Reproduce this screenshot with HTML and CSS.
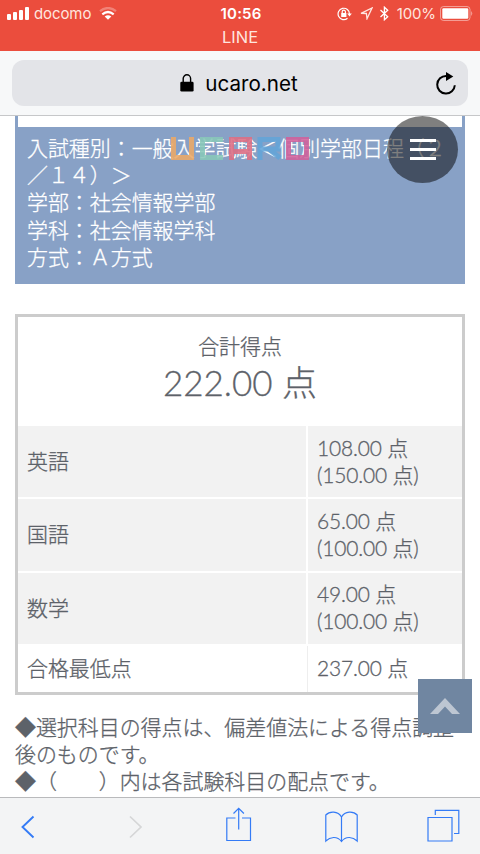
FILE: index.html
```
<!DOCTYPE html>
<html lang="ja">
<head>
<meta charset="utf-8">
<title>ucaro.net</title>
<link rel="stylesheet" href="styles.css">
</head>
<body>
<div class="phone">
  <header class="status">
    <div class="status-row">
      <div class="carrier">
        <svg class="signal" width="22" height="13" viewBox="0 0 22 13" fill="#fff"><rect x="0" y="7" width="4" height="6" rx="1"/><rect x="6" y="5" width="4" height="8" rx="1"/><rect x="12" y="3" width="4" height="10" rx="1"/><rect x="18" y="0" width="4" height="13" rx="1"/></svg>
        <span class="carrier-name">docomo</span>
        <svg class="wifi" width="18" height="13" viewBox="0 0 18 13" fill="none" stroke="#fff" stroke-width="2.2"><path d="M1 4.200Q9-2.200 17 4.200" opacity=".3"/><path d="M3.300 7.300Q9 2.700 14.700 7.300"/><path d="M5.700 9.500Q9 6.900 12.300 9.500L9 12.800z" fill="#fff" stroke="none"/></svg>
      </div>
      <span class="clock">10:56</span>
      <div class="indicators">
        <svg width="15" height="14" viewBox="0 0 15 14" fill="none" stroke="#fff" stroke-width="1.2"><path d="M12.500 7A5.700 5.700 0 1 0 10.500 11.300"/><path d="M10.200 6.500h4.600l-2.300 3z" fill="#fff" stroke="none"/><path d="M4.200 6h5.200v4H4.200z" fill="#fff" stroke="none"/><path d="M5.200 6V4.800a1.600 1.600 0 0 1 3.200 0V6"/></svg>
        <svg class="locate" width="13" height="13" viewBox="0 0 13 13" fill="none" stroke="#ffe5df" stroke-width="1.3"><path d="M1 6.400L12 1L7 11.700L6.400 6.500z"/></svg>
        <svg class="bluetooth" width="9" height="15" viewBox="0 0 9 15" fill="none" stroke="#fff" stroke-width="1.3"><path d="M.5 4l7.200 6.800-3.300 3V1.200l3.300 3L.5 11"/></svg>
        <span class="percent">100%</span>
        <svg class="battery" width="33" height="15" viewBox="0 0 33 15"><rect x=".5" y=".5" width="29.500" height="14" rx="3" fill="none" stroke="#fff" opacity=".45"/><rect x="2.300" y="2.300" width="26" height="10.400" rx="1.2" fill="#fff"/><path d="M31.200 5q2 2.500 0 5z" fill="#fff" opacity=".5"/></svg>
      </div>
    </div>
    <div class="app-name">LINE</div>
  </header>

  <div class="browser-bar">
    <div class="address">
      <span class="spacer"></span>
      <div class="host">
        <svg width="14" height="18" viewBox="0 0 14 18"><path d="M3.200 9V4.500a3.700 3.700 0 0 1 7.400 0V9" fill="none" stroke="#000" stroke-width="1.4"/><rect x=".3" y="7.800" width="13.300" height="9.700" rx="1.3"/></svg>
        <span>ucaro.net</span>
      </div>
      <div class="reload"><svg width="22" height="25" viewBox="0 0 22 25"><path d="M11.300 5A8.800 8.800 0 1 0 19.800 14.300" fill="none" stroke="#000" stroke-width="2"/><path d="M11 1l7.300 4.600-7.300 4.500z"/></svg></div>
    </div>
  </div>

  <main class="page">
    <section class="exam">
      <div class="exam-gap"></div>
      <div class="exam-body">
        <p>入試種別：一般入学試験＜個別学部日程（２</p>
        <p>／１４）＞</p>
        <p>学部：社会情報学部</p>
        <p>学科：社会情報学科</p>
        <p>方式：Ａ方式</p>
      </div>
    </section>
    <section class="scores">
      <div class="total">
        <div class="total-label">合計得点</div>
        <div class="total-value">222.00 点</div>
      </div>
      <div class="row"><div class="subject">英語</div><div class="points"><span>108.00 点</span><span>(150.00 点)</span></div></div>
      <div class="row"><div class="subject">国語</div><div class="points"><span>65.00 点</span><span>(100.00 点)</span></div></div>
      <div class="row"><div class="subject">数学</div><div class="points"><span>49.00 点</span><span>(100.00 点)</span></div></div>
      <div class="row row-last"><div class="subject">合格最低点</div><div class="points"><span>237.00 点</span></div></div>
    </section>
    <section class="notes">
      <p>◆選択科目の得点は、偏差値法による得点調整</p>
      <p>後のものです。</p>
      <p>◆（　　）内は各試験科目の配点です。</p>
    </section>

    <svg class="logo" width="140" height="24" viewBox="0 0 140 24" fill="none" stroke-width="5">
      <path d="M2.500 0V20.500H20.500V0" stroke="#edaa67"/>
      <path d="M52 2.500H31.500V20.500H52" stroke="#88c8b9"/>
      <path d="M60.500 23V2.500H78.500V23M60 14.500H78" stroke="#df6e84"/>
      <path d="M89 23V2.500H107V12H90M99 13L109 21" stroke="#63a5d9"/>
      <path d="M117.500 2.500H135.500V20.500H117.500Z" stroke="#d1619b"/>
    </svg>
    <div class="menu"><i></i><i></i><i></i></div>
    <div class="to-top"><svg width="32" height="16" viewBox="0 0 32 16"><path d="M1 16L16 0L31 16H23L16 8.500L9 16z" fill="#bdc6d2"/></svg></div>
  </main>

  <nav class="toolbar">
    <svg class="back" width="14" height="24" viewBox="0 0 14 24" fill="none" stroke="#347bf6" stroke-width="1.9"><path d="M12.500 1.500L1.500 12L12.500 22.500"/></svg>
    <svg class="forward" width="14" height="24" viewBox="0 0 14 24" fill="none" stroke="#d5d6d7" stroke-width="1.7"><path d="M1 1.500L12 12L1 22.500"/></svg>
    <svg class="share" width="26" height="35" viewBox="0 0 26 35" fill="none" stroke="#347bf6" stroke-width="1.2"><path d="M9.500 11H.8V33.500H24.500V11H16M12.700 22.500V1.500M7.500 6.500L12.700 1.300L17.900 6.500"/></svg>
    <svg class="book" width="34" height="32" viewBox="0 0 34 32" fill="none" stroke="#347bf6" stroke-width="1.2"><path d="M16.500 6C13-.3 4.500 0 .8 4V30C5 26 12 24.500 16.500 30.500C21 24.500 28 26 32.200 30V4C28.500 0 20 -.3 16.500 6V31"/></svg>
    <svg class="tabs" width="33" height="33" viewBox="0 0 33 33" fill="none" stroke="#347bf6" stroke-width="1.2"><path d="M1 8.500H25V32H1zM8.300 6V1.300H31.800V24.500H27"/></svg>
  </nav>
</div>
</body>
</html>
```

FILE: styles.css
```
* { box-sizing: border-box; }
body { margin: 0; background: #fff; font-family: Inter, "Noto Sans CJK JP", sans-serif; }
p { margin: 0; }
svg { display: block; flex: none; }
.phone { display: flex; flex-direction: column; width: 480px; height: 854px; overflow: hidden; }

.status { height: 51px; flex: none; background: #eb4d3d; color: #fff; }
.status-row { display: grid; grid-template-columns: 1fr auto 1fr; align-items: center; height: 27px; padding: 0 7px; }
.carrier, .indicators { display: flex; align-items: center; }
.carrier-name { margin-left: 5px; font-size: 15px; line-height: 20px; letter-spacing: -.1px; color: #ffe5df; }
.wifi { margin-left: 8px; }
.clock { padding-left: 2px; font-size: 15px; font-weight: 600; line-height: 20px; letter-spacing: .15px; }
.indicators { justify-content: flex-end; }
.locate { margin-left: 8px; }
.bluetooth { margin-left: 7px; }
.percent { margin-left: 8px; font-size: 15px; letter-spacing: -.1px; color: #ffe5df; }
.battery { margin-left: 4px; }
.app-name { text-align: center; font-size: 16.500px; line-height: 21px; color: #ffe5df; }

.browser-bar { height: 65px; flex: none; padding: 9px 12px; background: #f7f8f9; border-bottom: 1px solid #c6c7c9; }
.address { display: grid; grid-template-columns: 1fr auto 1fr; align-items: center; height: 46px; padding: 0 11px; border-radius: 12px; background: #e3e4e8; }
.host { display: flex; align-items: center; gap: 11px; margin-left: -2px; font-size: 20.600px; color: #000; }
.reload { justify-self: end; }

.page { position: relative; flex: 1; min-height: 0; overflow: hidden; padding: 0 15px; font-family: Lato, "Noto Sans CJK JP", sans-serif; font-weight: 300; font-size: 20.950px; color: #5d6269; -webkit-text-stroke: .3px currentColor; }
.exam { height: 168px; border: 3px solid #88a1c6; border-top: 0; background: #88a1c6; color: #fff; }
.exam-gap { height: 11px; background: #fff; }
.exam-body { padding: 7px 9px 0; line-height: 27.200px; white-space: nowrap; }

.scores { margin-top: 30px; height: 381px; border: 3px solid #ccc; }
.total { height: 109px; padding-top: 15px; text-align: center; }
.total-label { line-height: 28px; }
.total-value { font-size: 35px; line-height: 45px; }
.row { display: grid; grid-template-columns: 288px 1fr; column-gap: 2px; height: 71.300px; margin-bottom: 2px; }
.subject, .points { display: flex; background: #f2f2f2; padding: 0 9px 2px; line-height: 27px; white-space: nowrap; }
.subject { align-items: center; }
.points { flex-direction: column; justify-content: center; letter-spacing: -.15px; }
.row-last { height: 46px; margin: 0; }
.row-last > div { background: #fff; }
.row-last .points { box-shadow: -1px 0 #eee; }
.notes { margin-top: 18px; line-height: 27px; white-space: nowrap; }

.logo { position: absolute; left: 171px; top: 21px; opacity: .88; }
.menu { position: absolute; left: 387px; top: 0; width: 71px; height: 67px; display: flex; flex-direction: column; align-items: center; justify-content: center; gap: 6px; border-radius: 50%; background: rgba(0, 0, 0, .5); }
.menu i { width: 26px; height: 3px; background: #fff; }
.to-top { position: absolute; left: 418px; top: 563px; width: 54px; height: 54px; display: grid; place-items: center; background: #7086a1; }

.toolbar { display: flex; align-items: center; height: 57px; flex: none; padding: 0 20px 0 21px; background: #f3f4f5; border-top: 1px solid #b9babc; }
.back, .forward { margin-top: 2px; }
.forward { margin-left: 94px; }
.share { margin-left: 83px; margin-top: -3px; }
.book { margin-left: 73px; margin-top: 2px; }
.tabs { margin-left: auto; margin-top: -1px; }
```
